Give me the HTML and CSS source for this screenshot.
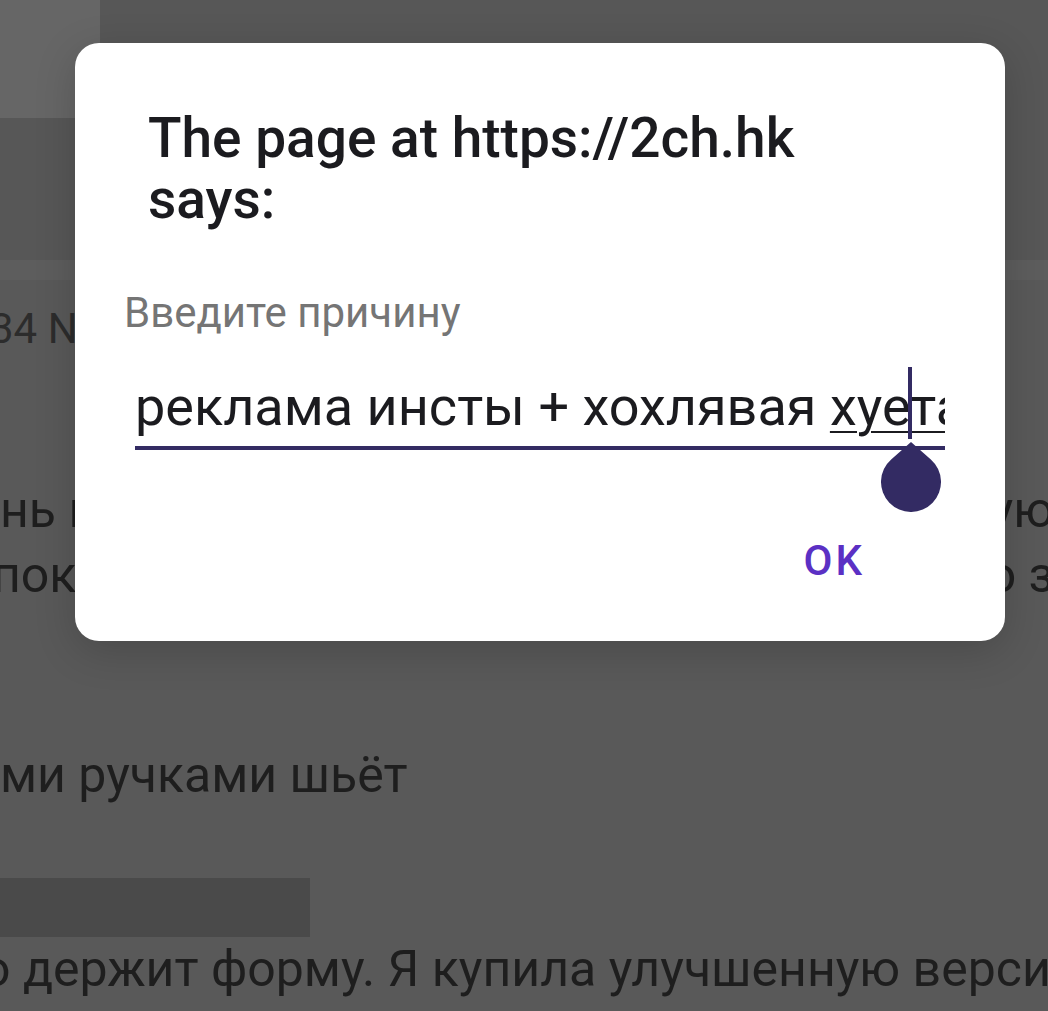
FILE: index.html
```html
<!DOCTYPE html>
<html lang="ru">
<head>
<meta charset="utf-8">
<title>2ch.hk</title>
<link rel="stylesheet" href="styles.css">
</head>
<body>
<div class="page">
  <div class="top">
    <div class="thumb"></div>
  </div>
  <div class="band"></div>
  <div class="post">
    <div class="meta">34 N</div>
    <div class="line first"><span>нь нравится</span><span class="tail">рекомендую</span></div>
    <div class="line"><span class="cut">пока</span><span class="tail">о з</span></div>
    <div class="line gap">ми ручками шьёт</div>
    <div class="quote"></div>
    <div class="line last">о держит форму. Я купила улучшенную версию</div>
  </div>
</div>

<div class="dialog">
  <div class="title">The page at https://2ch.hk<br>says:</div>
  <div class="label">Введите причину</div>
  <div class="field">
    <div class="value">реклама инсты + хохлявая <u>хуета</u></div>
    <span class="cursor"></span>
    <svg class="handle" width="60" height="70" viewBox="0 0 60 70">
      <path d="M30 0 L49.84 17.5 A30 30 0 1 1 10.16 17.5 Z" fill="#332b63"/>
    </svg>
  </div>
  <div class="actions">
    <span class="btn">OK</span>
  </div>
</div>
</body>
</html>
```

FILE: styles.css
```css
* { box-sizing: border-box; }
html, body { margin: 0; padding: 0; }
body { width: 1048px; height: 1011px; overflow: hidden; background: #595959;
       font-family: Roboto, "Noto Sans", sans-serif; }

.page { width: 1048px; }
.top { height: 260px; background: #575757; }
.thumb { width: 100px; height: 118px; background: #666; }
.band { height: 20px; background: #5d5d5d; }

.post { background: #595959; color: #1e1e1e; overflow: hidden; }
.meta { font-size: 42px; color: #2c2c2c; margin-top: 24px; line-height: 50px;
        margin-left: -10px; }
.line { font-size: 50px; line-height: 65px; white-space: nowrap;
        display: flex; justify-content: space-between; }
.first { margin-top: 124px; }
.cut { margin-left: -8px; }
.tail { margin-right: -6px; }
.gap { margin-top: 135px; }
.quote { width: 310px; height: 59px; background: #4a4a4a; margin-top: 70px; }
.last { margin-left: -18px; }

.dialog {
  position: absolute; left: 75px; top: 43px; width: 930px; height: 598px;
  background: #fff; border-radius: 24px;
  box-shadow: 0 10px 40px rgba(0, 0, 0, 0.18);
  padding: 65px 60px 0 49px;
}
.title { font-size: 55px; font-weight: 500; line-height: 61px; color: #1b1b1f;
         padding-left: 24px; }
.label { font-size: 42px; color: #757575; margin-top: 58px; }

.field { position: relative; margin-left: 11px; margin-top: 37px;
         border-bottom: 4px solid #332b63; }
.value { font-size: 54px; line-height: 65px; color: #1b1b1f; white-space: nowrap;
         overflow: hidden; padding-bottom: 7px; }
.value u { text-decoration-thickness: 2px; text-underline-offset: 6px; }
.cursor { position: absolute; left: 773px; top: -7px; width: 4px; height: 72px;
          background: #332b63; }
.handle { position: absolute; left: 746px; top: 68px; }

.actions { display: flex; justify-content: flex-end; margin-top: 86px; padding-right: 80px; }
.btn { font-size: 42px; font-weight: 500; letter-spacing: 3px; color: #5b30c4; }
```
